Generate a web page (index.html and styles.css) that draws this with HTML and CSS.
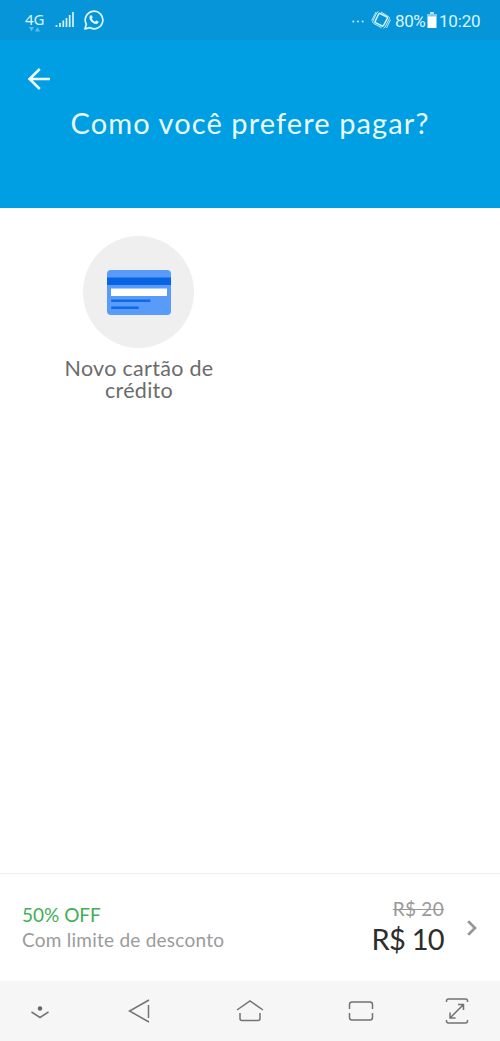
FILE: index.html
```html
<!DOCTYPE html>
<html lang="pt-BR">
<head>
<meta charset="utf-8">
<title>Como você prefere pagar?</title>
<link rel="stylesheet" href="styles.css">
</head>
<body>
<div class="screen">
  <div class="status">
    <div class="network"><span>4G</span>
      <svg width="12" height="5" viewBox="0 0 12 5"><path d="M1 0h5L3.500 4.500zM7 4.500h5L9.500 0z" fill="#58bdf0"/></svg>
    </div>
    <svg class="signal" width="19" height="17" viewBox="0 0 19 17" stroke="#d9f5ff" stroke-width="1.700"><path d="M1.500 14v2M5 12v4M8.300 9.500V16M11.500 7v9M14.700 4v12M18 1v15"/></svg>
    <svg class="whatsapp" width="20" height="20" viewBox="0 0 20 20"><path d="M1 19l1.300-4.800A8.800 8.800 0 1 1 5.600 17.600z" fill="none" stroke="#e1f8ff" stroke-width="1.700" stroke-linejoin="round"/><path d="M6.700 5.200h1l1 2.400-.9 1.200c.8 1.400 1.900 2.400 3.300 3l1.200-1.300 2.300 1.100c.2 1.700-1.500 2.700-2.700 2.500C8.500 13.600 5.500 10.300 5.400 7.500c0-1 .6-1.900 1.300-2.300z" fill="#e1f8ff"/></svg>
    <svg class="dots" width="12" height="3" viewBox="0 0 12 3" fill="#c6edff"><circle cx="1.300" cy="1.500" r="1"/><circle cx="6" cy="1.500" r="1"/><circle cx="10.700" cy="1.500" r="1"/></svg>
    <svg class="vibrate" width="20" height="20" viewBox="0 0 20 20" fill="none" stroke="#d9f5ff"><path d="M9 3.500l7 3.500q.8.500.4 1.300L12.500 15.500q-.5.900-1.400.5L4.500 12.700q-.9-.5-.4-1.400L7.700 4q.5-.9 1.300-.5z" stroke-width="1.500"/><path d="M7.500 1.500L6 2.500 2 10.800q-.8 1.700.7 2.600L10.500 17.800M5 2L.7 10.500M12.500 18.500l1.600-1.500L18.200 9q.7-1.600-.8-2.500L10 2M15.500 18l4-8.300" stroke-width=".9"/></svg>
    <span class="percent">80%</span>
    <svg class="battery" width="10" height="18" viewBox="0 0 10 18"><path d="M3 1h4v2H3z" fill="#b7e4f5"/><path d="M.5 3h9v14h-9z" fill="#fff"/><path d="M1 3h8v2.500H1z" fill="#80caec"/></svg>
    <span class="clock">10:20</span>
  </div>
  <header class="header">
    <svg class="back" width="24" height="24" viewBox="0 0 24 24" fill="none" stroke="#f3fdff" stroke-width="2.500"><path d="M12.800 2L2.500 12l10.300 10M2.500 12H23"/></svg>
    <h1 class="title">Como você prefere pagar?</h1>
  </header>
  <main class="methods">
    <div class="method">
      <div class="circle">
        <svg width="64" height="45" viewBox="0 0 64 45"><rect width="64" height="45" rx="4" fill="#589bf9"/><path d="M0 7.500h64V15H0z" fill="#0864e5"/><path d="M4 18.500h56V26H4z" fill="#fff"/><path d="M5.300 30.800h37M5.300 37.800h25.400" stroke="#1069e8" stroke-width="2.600" stroke-linecap="round"/></svg>
      </div>
      <div class="label">Novo cartão de<br>crédito</div>
    </div>
  </main>
  <section class="summary">
    <div class="discount"><div class="off">50% OFF</div><div class="limit">Com limite de desconto</div></div>
    <div class="prices"><div class="old">R$ 20</div><div class="price">R$ 10</div></div>
    <svg class="chevron" width="10" height="16" viewBox="0 0 10 16"><path d="M1.200 1.200L8 8l-6.800 6.800" fill="none" stroke="#969696" stroke-width="2.700"/></svg>
  </section>
  <nav class="nav">
    <svg width="20" height="16" viewBox="0 0 20 16"><circle cx="10" cy="5.500" r="2.200" fill="#666"/><path d="M1.500 9l8.500 5.500L18.500 9" fill="none" stroke="#737373" stroke-width="1.500"/></svg>
    <svg width="22" height="24" viewBox="0 0 22 24" fill="none" stroke="#737373" stroke-width="1.500"><path d="M21 1L1.500 12 21 23M20.500 6v13"/></svg>
    <svg width="28" height="24" viewBox="0 0 28 24" fill="none" stroke="#737373" stroke-width="1.500"><path d="M1 11L14 2l13 9M4 14v5.500q0 2 2 2h16q2 0 2-2V14"/></svg>
    <svg width="26" height="22" viewBox="0 0 26 22" fill="none" stroke="#737373" stroke-width="1.500"><path d="M1.500 9V4.500q0-2.500 2.500-2.500h18q2.500 0 2.500 2.500V9M1.500 13v4.500Q1.500 20 4 20h18q2.500 0 2.500-2.500V13"/></svg>
    <svg width="24" height="28" viewBox="0 0 24 28" fill="none" stroke="#737373" stroke-width="1.500"><path d="M1.500 5V4q0-2 2-2h17q2 0 2 2v1M1.500 23v1q0 2 2 2h17q2 0 2-2v-1M5 21L18.500 7.500M13 7.500h5.500V13M5 15.500V21h5.500"/></svg>
  </nav>
</div>
</body>
</html>
```
FILE: styles.css
```css
* { box-sizing: border-box; }
body { margin: 0; font-family: Lato, sans-serif; background: #fff; }
svg { display: block; flex: none; }
.screen { width: 500px; height: 1041px; display: flex; flex-direction: column; overflow: hidden; }
.status { height: 40px; flex: none; background: #0695d8; color: #d9f5ff; display: flex; align-items: flex-start; font-family: Roboto, sans-serif; white-space: nowrap; }
.network { margin: 12px 0 0 25px; width: 20px; font-family: "Noto Sans", sans-serif; font-size: 15px; line-height: 15px; letter-spacing: -.2px; }
.network svg { margin: 0 0 0 3px; }
.signal { margin: 11px 0 0 10px; }
.whatsapp { margin: 10px 0 0 10px; }
.dots { margin: 20px 0 0 248px; }
.vibrate { margin: 10px 0 0 7px; }
.percent { margin: 11px 0 0 4px; width: 31px; font-size: 17px; line-height: 20px; letter-spacing: -.4px; }
.battery { margin: 11px 0 0 1px; }
.clock { margin: 11px 0 0 2px; font-size: 17px; line-height: 20px; letter-spacing: -.2px; }
.header { height: 168px; flex: none; background: #009ee3; padding: 27px 27px 0; }
.title { margin: 12px -27px 0; color: #e8faff; font-size: 29px; line-height: 40px; font-weight: 400; text-align: center; letter-spacing: 1.1px; white-space: nowrap; }
.methods { flex: 1; padding: 28px 0 0 28px; }
.method { width: 222px; display: flex; flex-direction: column; align-items: center; }
.circle { width: 111px; height: 112px; margin-right: 1px; border-radius: 50%; background: #efefef; display: flex; align-items: center; justify-content: center; }
.label { margin-top: 9px; color: #6b6b6b; font-size: 21.500px; line-height: 22px; text-align: center; letter-spacing: .3px; white-space: nowrap; }
.summary { height: 108px; flex: none; border-top: 1px solid #eee; display: flex; padding: 0 23px 0 22px; }
.discount { flex: 1; padding-top: 28px; font-size: 19px; line-height: 25px; white-space: nowrap; }
.off { color: #42ae57; }
.limit { color: #9b9b9b; letter-spacing: .25px; }
.prices { padding-top: 22px; text-align: right; white-space: nowrap; }
.old { color: #999; font-size: 19px; line-height: 25px; letter-spacing: .3px; text-decoration: line-through; text-decoration-thickness: 1px; }
.price { color: #2d2d2d; font-size: 29px; line-height: 36px; letter-spacing: -.7px; }
.chevron { margin: 46px 0 0 23px; }
.nav { height: 60px; flex: none; background: #f6f6f6; display: grid; grid-template-columns: 98px 108px 112px 97px 24px; align-items: center; padding-left: 30px; }
```
